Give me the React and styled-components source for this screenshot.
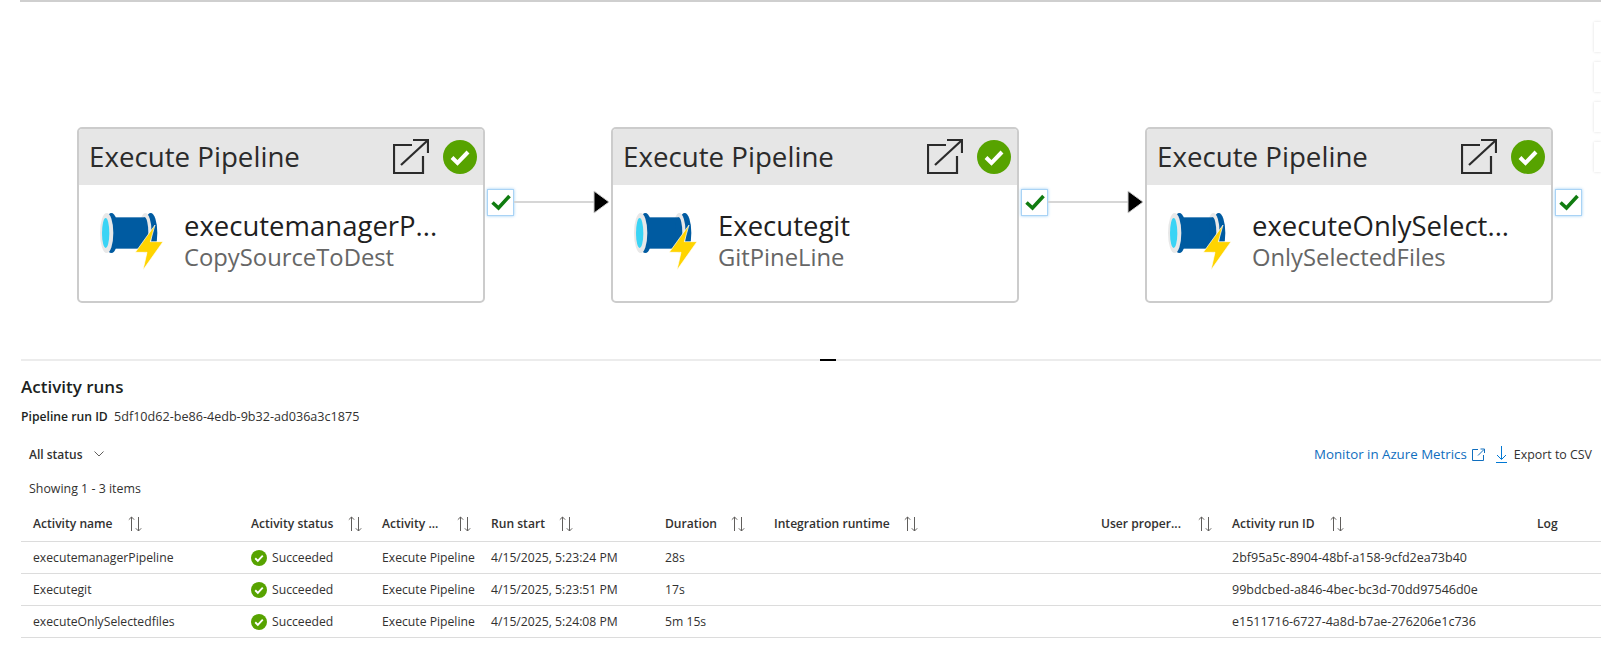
import React from 'react';
import styled, { createGlobalStyle } from 'styled-components';

const FONT = `'Open Sans', 'Noto Sans', sans-serif`;

const GlobalStyle = createGlobalStyle`
    html, body {
        margin: 0;
        padding: 0;
        background: #fff;
    }
    body {
        font-family: ${FONT};
        color: #323130;
    }
`

const Page = styled.div`
    position: relative;
    width: 1601px;
    height: 656px;
    overflow: hidden;
`

const Canvas = styled.div`
    position: relative;
    height: 359px;
    box-sizing: border-box;
    margin-left: 20px;
    border-top: 2px solid #cfcfcf;
    padding: 125px 0 0 57px;
    display: flex;
    align-items: flex-start;
`

const ToolStack = styled.div`
    position: absolute;
    top: 20px;
    right: 0;
    display: flex;
    flex-direction: column;
    gap: 10px;
`

const ToolButton = styled.div`
    width: 7px;
    height: 30px;
    background: #fff;
    box-shadow: 0 0 3px rgba(0, 0, 0, 0.14);
`

const Node = styled.div`
    flex: none;
    width: 408px;
    height: 176px;
    box-sizing: border-box;
    border: 2px solid #cccccc;
    border-radius: 5px;
    background: #fff;
    overflow: hidden;
`

const NodeHeader = styled.div`
    height: 56px;
    background: #e6e6e6;
    display: flex;
    align-items: center;
    gap: 14px;
    padding: 0 6px 0 10px;
`

const NodeTitle = styled.div`
    flex: 1;
    font-size: 27.7px;
    line-height: 34px;
    margin-bottom: 2px;
    color: #2b2b2b;
    white-space: nowrap;
`

const NodeBody = styled.div`
    display: flex;
    padding: 15px 0 0 11px;
`

const NodeText = styled.div`
    margin: 9px 0 0 4px;
    white-space: nowrap;
`

const NodeName = styled.div`
    font-size: 27.5px;
    line-height: 34px;
    color: #1f1f1f;
`

const NodeSub = styled.div`
    font-size: 23.8px;
    line-height: 28px;
    color: #666666;
`

const Connector = styled.div`
    flex: none;
    width: 126px;
    height: 27px;
    margin-top: 62px;
    padding-left: 2px;
    box-sizing: border-box;
    display: flex;
    align-items: center;
`

const OutputCheck = styled.div`
    flex: none;
    width: 27px;
    height: 27px;
    box-sizing: border-box;
    border: 1px solid #a9d3f5;
    box-shadow: 0 0 3px #9accf4;
    background: #fff;
    display: flex;
    align-items: center;
    justify-content: center;
`

const Wire = styled.div`
    flex: none;
    width: 80px;
    height: 2px;
    margin-top: -1px;
    background: #d6d6d6;
`

const WireHead = styled.svg`
    flex: none;
    width: 17px;
    height: 24px;
    margin: -2px 0 0 -1px;
`

const Divider = styled.div`
    position: relative;
    margin-left: 21px;
    height: 2px;
    background: #ececec;
`

const DragHandle = styled.div`
    position: absolute;
    left: 799px;
    top: 0;
    width: 16px;
    height: 2px;
    background: #000;
`

const Panel = styled.div`
    padding-left: 21px;
`

const PanelTitle = styled.div`
    margin-top: 15px;
    height: 22px;
    line-height: 22px;
    font-size: 17px;
    font-weight: 600;
    color: #201f1e;
`

const RunIdRow = styled.div`
    margin-top: 8px;
    height: 20px;
    display: flex;
    align-items: center;
    font-size: 12.6px;
    white-space: nowrap;
`

const RunIdLabel = styled.span`
    width: 93px;
    font-size: 12.2px;
    font-weight: 600;
    color: #201f1e;
`

const Toolbar = styled.div`
    margin-top: 12px;
    height: 32px;
    padding: 0 9px 0 8px;
    display: flex;
    align-items: center;
    font-size: 12.4px;
`

const StatusFilter = styled.div`
    flex: 1;
    display: flex;
    align-items: center;
    gap: 11px;
    font-size: 12px;
    font-weight: 600;
    color: #323130;
`

const MetricsLink = styled.a`
    display: flex;
    align-items: center;
    gap: 5px;
    font-size: 13.3px;
    color: #106ebe;
`

const ExportButton = styled.div`
    display: flex;
    align-items: center;
    gap: 7px;
    margin-left: 11px;
    color: #323130;
`

const ItemCount = styled.div`
    margin-top: 9px;
    height: 20px;
    line-height: 20px;
    padding-left: 8px;
    font-size: 12.4px;
    color: #323130;
`

const Table = styled.div`
    margin-top: 9px;
`

const Row = styled.div`
    display: grid;
    grid-template-columns: 218px 131px 109px 174px 109px 327px 131px 305px 1fr;
    align-items: center;
    box-sizing: border-box;
    height: ${({header}) => header ? '34px' : '32px'};
    padding-bottom: ${({header}) => header ? '2px' : '0'};
    border-bottom: 1px solid #dcdcdc;
    font-size: 12.2px;
    white-space: nowrap;
`

const HeaderCell = styled.div`
    display: flex;
    align-items: center;
    padding-left: 12px;
    font-size: 12.1px;
    font-weight: 600;
    color: #323130;
`

const HeaderLabel = styled.span`
    width: ${({labelWidth}) => labelWidth}px;
`

const Cell = styled.div`
    display: flex;
    align-items: center;
    gap: 5px;
    padding-left: 12px;
    color: #323130;
`

const IdCell = styled(Cell)`
    font-size: 12.5px;
`

const SortIcon = () => (
    <svg width="14" height="16" viewBox="0 0 14 16" fill="none" stroke="#605e5c" strokeWidth="1">
        <path d="M3.5 15V1M.8 3.7 3.5 1l2.7 2.7" />
        <path d="M10.5 1v14M7.8 12.3l2.7 2.7 2.7-2.7" />
    </svg>
);

const SuccessIcon = ({size}) => (
    <svg width={size} height={size} viewBox="0 0 34 34">
        <circle cx="17" cy="17" r="17" fill="#57a300" />
        <path d="M9 17.5l5.5 5.5L25 12" fill="none" stroke="#fff" strokeWidth="4" />
    </svg>
);

const ExternalIcon = () => (
    <svg width="36" height="36" viewBox="0 0 36 36" fill="none" stroke="#2b2b2b" strokeWidth="2.2">
        <path d="M19 6H1v28h29V17" />
        <path d="M8 26 34 2" />
        <path d="M20 1h15v13" />
    </svg>
);

const PipeIcon = () => (
    <svg width="90" height="80" viewBox="0 0 270 240">
        <ellipse cx="182" cy="99" rx="20" ry="60" fill="#005ba1" />
        <ellipse cx="166" cy="99" rx="19" ry="60" fill="#e8e8e8" />
        <ellipse cx="64" cy="99" rx="21" ry="60" fill="#005ba1" />
        <rect x="64" y="52" width="100" height="94" fill="#005ba1" />
        <ellipse cx="164" cy="99" rx="11" ry="47" fill="#005ba1" />
        <ellipse cx="50" cy="99" rx="20" ry="60" fill="#e8e8e8" />
        <ellipse cx="47" cy="99" rx="11" ry="45" fill="#3ad4f5" />
        <path d="M195 75 136 157h35l-12 53 60-85h-38z" fill="#ffd400" stroke="#fff" strokeWidth="2" />
    </svg>
);

const SmallCheck = () => (
    <svg width="20" height="17" viewBox="0 0 20 17" fill="none" stroke="#107c10" strokeWidth="3.6">
        <path d="M1.5 8.5 7.5 14 18.5 2" />
    </svg>
);

const nodes = [
    {name: 'executemanagerP...', sub: 'CopySourceToDest'},
    {name: 'Executegit', sub: 'GitPineLine'},
    {name: 'executeOnlySelect...', sub: 'OnlySelectedFiles'}
];

const columns = [
    {label: 'Activity name', labelWidth: 95},
    {label: 'Activity status', labelWidth: 97},
    {label: 'Activity ...', labelWidth: 75},
    {label: 'Run start', labelWidth: 68},
    {label: 'Duration', labelWidth: 66},
    {label: 'Integration runtime', labelWidth: 130},
    {label: 'User proper...', labelWidth: 97},
    {label: 'Activity run ID', labelWidth: 98},
    {label: 'Log', noSort: true}
];

const runs = [
    {name: 'executemanagerPipeline', start: '4/15/2025, 5:23:24 PM', duration: '28s', id: '2bf95a5c-8904-48bf-a158-9cfd2ea73b40'},
    {name: 'Executegit', start: '4/15/2025, 5:23:51 PM', duration: '17s', id: '99bdcbed-a846-4bec-bc3d-70dd97546d0e'},
    {name: 'executeOnlySelectedfiles', start: '4/15/2025, 5:24:08 PM', duration: '5m 15s', id: 'e1511716-6727-4a8d-b7ae-276206e1c736'}
];

export default function App(){
    return <Page>
        <GlobalStyle />
        <Canvas>
            {nodes.map((node, i) => <React.Fragment key={node.sub}>
                <Node>
                    <NodeHeader>
                        <NodeTitle>Execute Pipeline</NodeTitle>
                        <ExternalIcon />
                        <SuccessIcon size={34} />
                    </NodeHeader>
                    <NodeBody>
                        <PipeIcon />
                        <NodeText>
                            <NodeName>{node.name}</NodeName>
                            <NodeSub>{node.sub}</NodeSub>
                        </NodeText>
                    </NodeBody>
                </Node>
                <Connector>
                    <OutputCheck><SmallCheck /></OutputCheck>
                    {i < nodes.length - 1 && <Wire />}
                    {i < nodes.length - 1 && <WireHead viewBox="0 0 17 24">
                        <path d="M1 1 16 12 1 23z" fill="#000" stroke="#cfcfcf" strokeWidth="1" />
                    </WireHead>}
                </Connector>
            </React.Fragment>)}
            <ToolStack>
                <ToolButton />
                <ToolButton />
                <ToolButton />
                <ToolButton />
            </ToolStack>
        </Canvas>
        <Divider><DragHandle /></Divider>
        <Panel>
            <PanelTitle>Activity runs</PanelTitle>
            <RunIdRow>
                <RunIdLabel>Pipeline run ID</RunIdLabel>
                5df10d62-be86-4edb-9b32-ad036a3c1875
            </RunIdRow>
            <Toolbar>
                <StatusFilter>
                    All status
                    <svg width="10" height="6" viewBox="0 0 10 6" fill="none" stroke="#605e5c" strokeWidth="1">
                        <path d="M.5.5 5 5 9.500.5" />
                    </svg>
                </StatusFilter>
                <MetricsLink>
                    Monitor in Azure Metrics
                    <svg width="13" height="13" viewBox="0 0 13 13" fill="none" stroke="#106ebe" strokeWidth="1">
                        <path d="M6 1.500H.5v11h11V7" />
                        <path d="M6 7.500 12 1.500M8.500 1H12.500V5" />
                    </svg>
                </MetricsLink>
                <ExportButton>
                    <svg width="11" height="17" viewBox="0 0 11 17" fill="none" stroke="#0078d4" strokeWidth="1">
                        <path d="M5.500 0v13M1 9l4.500 4.500L10 9M0 16.500h11" />
                    </svg>
                    Export to CSV
                </ExportButton>
            </Toolbar>
            <ItemCount>Showing 1 - 3 items</ItemCount>
            <Table>
                <Row header>
                    {columns.map(col => <HeaderCell key={col.label}>
                        <HeaderLabel labelWidth={col.labelWidth}>{col.label}</HeaderLabel>
                        {!col.noSort && <SortIcon />}
                    </HeaderCell>)}
                </Row>
                {runs.map(run => <Row key={run.id}>
                    <Cell>{run.name}</Cell>
                    <Cell><SuccessIcon size={16} />Succeeded</Cell>
                    <Cell>Execute Pipeline</Cell>
                    <Cell>{run.start}</Cell>
                    <Cell>{run.duration}</Cell>
                    <Cell />
                    <Cell />
                    <IdCell>{run.id}</IdCell>
                    <Cell />
                </Row>)}
            </Table>
        </Panel>
    </Page>
}
